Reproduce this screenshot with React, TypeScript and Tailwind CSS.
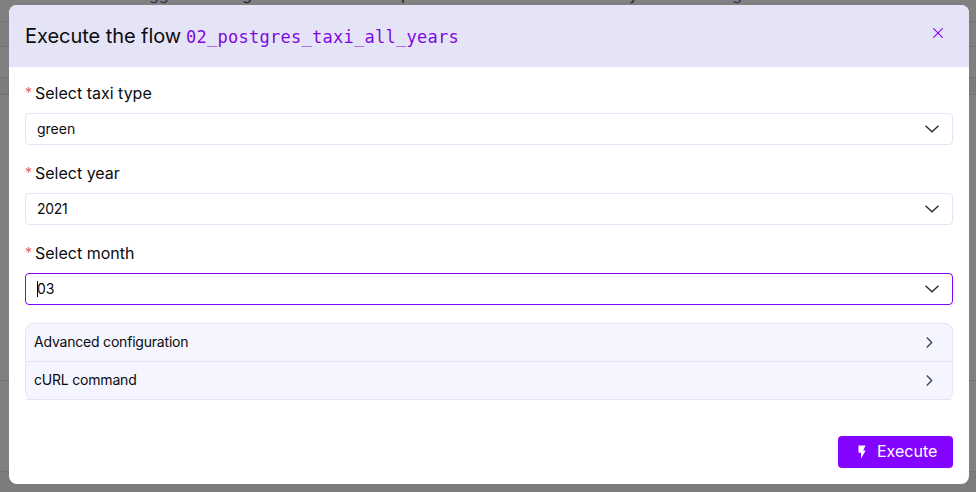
import type { ReactNode } from "react";

const bands = [
  "h-[21px] bg-[#808080]",
  "h-[25px] border-t border-[#717178] bg-[#7e7e7f]",
  "h-[31px] border-t border-[#717178] bg-[#808080]",
  "h-[17px] border-t border-[#717178] bg-[#7c7c7f]",
  "h-[286px] border-t border-[#717178] bg-[#808080]",
  "h-[91px] border-t border-[#6c7078] bg-[#808080]",
  "h-[21px] border-t border-[#717178] bg-[#7c7c7f]",
];

function Backdrop() {
  return (
    <div aria-hidden="true" className="absolute inset-0 flex flex-col overflow-hidden">
      {bands.map((band, i) => (
        <div key={i} className={band} />
      ))}
      <div className="absolute top-[-16px] left-0 h-5 w-full text-base leading-5 text-[#20212f]">
        <span className="absolute left-[149px] text-[#2d3157]">gg</span>
        <span className="absolute left-[242px]">g</span>
        <span className="absolute left-[401px]">p</span>
        <span className="absolute left-[629px]">y</span>
        <span className="absolute left-[732px] text-[#2d3157]">g</span>
      </div>
    </div>
  );
}

function ChevronDown() {
  return (
    <svg width="14" height="8" viewBox="0 0 14 8" fill="none" stroke="#26282d" strokeWidth="1.3">
      <path d="M.5 .7 7 6.8 13.5 .7" />
    </svg>
  );
}

function ChevronRight() {
  return (
    <svg width="7" height="11" viewBox="0 0 7 11" fill="none" stroke="#404559" strokeWidth="1.4">
      <path d="M.8 .6 5.7 5.5 .8 10.4" />
    </svg>
  );
}

function Field({ label, children, focused = false }: { label: ReactNode; children: ReactNode; focused?: boolean }) {
  return (
    <div className="flex h-20 flex-col">
      <div className="flex h-[38px] items-center pb-0.5 text-base leading-5">
        <span className="w-2.5 text-sm text-[#e3656d]">*</span>
        {label}
      </div>
      <div
        className={
          "flex h-8 items-center justify-between rounded-[4px] border pr-[13px] pl-[11px] text-sm " +
          (focused ? "border-[#8405ff]" : "border-[#e5e4f7]")
        }
      >
        <div className="flex items-center">
          {focused && <span className="-mr-px h-4 w-px bg-black" />}
          {children}
        </div>
        <ChevronDown />
      </div>
    </div>
  );
}

export default function App() {
  return (
    <div className="relative h-[492px] w-[976px] overflow-hidden bg-[#808080] px-[9px] pt-[5px] font-['Inter',sans-serif] text-[#0b0b0f]">
      <Backdrop />
      <main className="relative flex h-[479px] w-[960px] flex-col overflow-hidden rounded-lg bg-white">
        <header className="flex h-[62px] items-center justify-between bg-[#e5e4f7] pr-[26px] pl-4">
          <h1 className="flex items-baseline text-xl leading-7">
            <span className="w-[161px] whitespace-nowrap tracking-[-0.05px]">Execute the flow</span>
            <span className="font-['DejaVu_Sans_Mono',monospace] text-[17px] tracking-[0.27px] text-[#7e08e0]">
              02_postgres_taxi_all_years
            </span>
          </h1>
          <svg className="mb-[7px]" width="10" height="10" viewBox="0 0 10 10" fill="none" stroke="#8405ff" strokeWidth="1.1">
            <path d="M.3 .3 9.7 9.7M9.7 .3 .3 9.7" />
          </svg>
        </header>
        <div className="flex flex-col px-4 pt-2">
          <Field label={<span>Select taxi type</span>}>green</Field>
          <Field label={<span>Select year</span>}>
            <span className="tracking-[-0.3px]">2021</span>
          </Field>
          <Field label={<span>Select month</span>} focused>
            03
          </Field>
          <section className="mt-2 flex h-[77px] flex-col overflow-hidden rounded-lg border border-[#e5e4f7] bg-[#f5f5ff] text-sm">
            <div className="flex h-[38px] items-center justify-between border-b border-[#e5e4f7] pr-[19px] pl-2">
              <span className="pb-0.5 tracking-[-0.2px]">Advanced configuration</span>
              <ChevronRight />
            </div>
            <div className="flex h-[37px] items-center justify-between pr-[19px] pl-2">
              <span className="pb-0.5 tracking-[-0.2px]">cURL command</span>
              <ChevronRight />
            </div>
          </section>
          <div className="mx-px -mt-px h-px bg-[#e5e4f7]" />
        </div>
        <footer className="mt-9 flex justify-end px-4">
          <button className="flex h-8 w-[115px] items-center rounded-[4px] bg-[#8405ff] pl-5 text-base text-white">
            <svg className="mr-[11px]" width="8" height="14" viewBox="0 0 8 14" fill="white">
              <path d="M.5 .5h7L5.2 5.5h2.5L3 13.5V7.8H.5z" />
            </svg>
            <span className="pb-0.5">Execute</span>
          </button>
        </footer>
      </main>
    </div>
  );
}
